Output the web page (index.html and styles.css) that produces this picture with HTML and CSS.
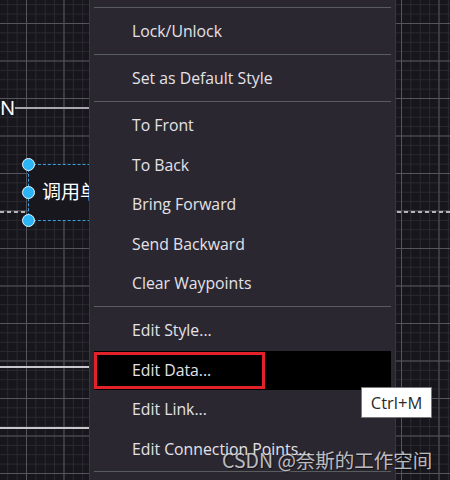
FILE: index.html
```html
<!DOCTYPE html>
<html>
<head>
<meta charset="utf-8">
<link rel="stylesheet" href="styles.css">
</head>
<body>
<div class="canvas">
  <div class="label-n">N</div>
  <div class="edge edge-top"></div>
  <div class="edge edge-mid"></div>
  <div class="edge edge-low"></div>
  <div class="dash dash-left"></div>
  <div class="dash dash-right"></div>
  <div class="node">
    <span class="node-text">调用单元</span>
    <span class="handle h-top"></span>
    <span class="handle h-mid"></span>
    <span class="handle h-bot"></span>
  </div>

  <div class="menu">
    <div class="sep"></div>
    <div class="item">Lock/Unlock</div>
    <div class="sep"></div>
    <div class="item">Set as Default Style</div>
    <div class="sep"></div>
    <div class="item">To Front</div>
    <div class="item">To Back</div>
    <div class="item">Bring Forward</div>
    <div class="item">Send Backward</div>
    <div class="item">Clear Waypoints</div>
    <div class="sep"></div>
    <div class="item">Edit Style...</div>
    <div class="item active">Edit Data...<span class="mark"></span></div>
    <div class="item">Edit Link...</div>
    <div class="item">Edit Connection Points...</div>
    <div class="sep"></div>
  </div>

  <div class="tooltip">Ctrl+M</div>
  <div class="watermark">CSDN @奈斯的工作空间</div>
</div>
</body>
</html>
```

FILE: styles.css
```css
html, body {
  margin: 0;
  padding: 0;
  background: #18161d;
}

.canvas {
  position: relative;
  width: 450px;
  height: 480px;
  overflow: hidden;
  background-color: #18161d;
  background-image:
    linear-gradient(to right, #57555c 1px, transparent 1px),
    linear-gradient(to bottom, #57555c 1px, transparent 1px),
    linear-gradient(to right, #2c2a31 1px, transparent 1px),
    linear-gradient(to bottom, #2c2a31 1px, transparent 1px);
  background-size: 37.5px 37.5px, 37.5px 37.5px, 9.375px 9.375px, 9.375px 9.375px;
  background-position: 26px 23px, 26px 23px, 26px 23px, 26px 23px;
  font-family: "Open Sans", "Noto Sans", sans-serif;
}

.label-n {
  position: absolute;
  left: 0;
  top: 95px;
  font-family: "Noto Sans", sans-serif;
  font-size: 20px;
  line-height: 26px;
  color: #ffffff;
}

.edge {
  position: absolute;
  height: 2px;
  background: #c9c7cc;
}
.edge-top { left: 15px; width: 80px; top: 107px; height: 2px; background: #a9a7ad; }
.edge-mid { left: 0; width: 95px; top: 366px; }
.edge-low { left: 0; width: 95px; top: 427px; }

.dash {
  position: absolute;
  height: 2px;
  background: repeating-linear-gradient(to right, #b5b4ba 0 4px, transparent 4px 7px);
}
.dash-left { left: 0; width: 27px; top: 211px; }
.dash-right { left: 397px; width: 60px; top: 211px; }

.node {
  position: absolute;
  left: 28px;
  top: 164px;
  width: 120px;
  height: 55px;
  border: 1px dashed #3a9fdc;
  background: #19171e;
}
.node-text {
  position: absolute;
  left: 13px;
  top: 13px;
  font-family: "Noto Sans CJK SC", sans-serif;
  font-size: 19px;
  line-height: 26px;
  color: #ffffff;
  white-space: nowrap;
}
.handle {
  position: absolute;
  left: -7px;
  width: 11px;
  height: 11px;
  border-radius: 50%;
  background: #2bb5f5;
  border: 1px solid #e8f6ff;
}
.h-top { top: -7px; }
.h-mid { top: 21px; }
.h-bot { top: 49px; }

.menu {
  position: absolute;
  left: 89px;
  top: 0;
  width: 297px;
  height: 480px;
  padding: 4.5px 4px 0;
  background: #2b2731;
  border-left: 1px solid #3b3741;
  border-right: 1px solid #3b3741;
}
.sep {
  height: 1px;
  margin: 2px 0 4.5px;
  background: #5a5d60;
}
.item {
  position: relative;
  height: 39.5px;
  line-height: 39.5px;
  padding-left: 38px;
  font-size: 15.8px;
  color: #e4e2e8;
  white-space: nowrap;
}
.item.active {
  background: #000000;
}
.mark {
  position: absolute;
  left: 0;
  top: 1.5px;
  width: 165px;
  height: 31px;
  border: 3px solid #e3212b;
}

.tooltip {
  position: absolute;
  left: 361px;
  top: 387px;
  width: 71px;
  height: 31px;
  box-sizing: border-box;
  background: #ffffff;
  border: 1px solid #7a7a7a;
  font-size: 16.5px;
  line-height: 29px;
  color: #2a2a2a;
  text-align: center;
}

.watermark {
  position: absolute;
  left: 222px;
  top: 446px;
  font-family: "Noto Sans CJK SC", sans-serif;
  font-size: 19.5px;
  line-height: 28px;
  color: rgba(225, 225, 228, 0.82);
  text-shadow: 1px 1px 1px rgba(0, 0, 0, 0.55);
  white-space: nowrap;
}
```
